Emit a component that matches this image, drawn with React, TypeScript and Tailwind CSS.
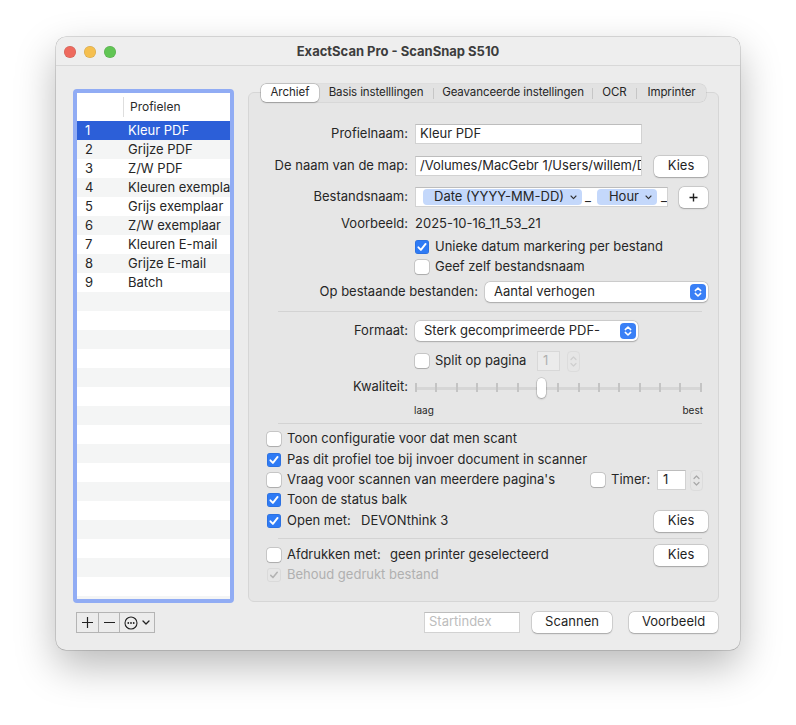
import React from "react";

const PROFILES = [
  "Kleur PDF",
  "Grijze PDF",
  "Z/W PDF",
  "Kleuren exemplaar",
  "Grijs exemplaar",
  "Z/W exemplaar",
  "Kleuren E-mail",
  "Grijze E-mail",
  "Batch",
];

const TABS = [
  { label: "Archief", w: "w-[58px]" },
  { label: "Basis instelllingen", w: "w-[114px]" },
  { label: "Geavanceerde instellingen", w: "w-[158px]" },
  { label: "OCR", w: "w-[43px]" },
  { label: "Imprinter", w: "w-[69px]" },
];

function Check({ on = false, dim = false }: { on?: boolean; dim?: boolean }) {
  if (dim) {
    return (
      <span className="w-[14px] h-[14px] shrink-0 rounded-[3px] border border-[#dadada] flex items-center justify-center">
        <svg width="12" height="12" viewBox="0 0 14 14">
          <path d="M3.2 7.4 L5.8 10 L10.8 3.8" fill="none" stroke="#b3b3b3" strokeWidth="1.8" strokeLinecap="round" strokeLinejoin="round" />
        </svg>
      </span>
    );
  }
  if (on) {
    return (
      <span className="w-[14px] h-[14px] shrink-0 rounded-[3px] bg-[#2f7bf5] flex items-center justify-center shadow-[inset_0_0_0_0.5px_rgba(0,0,0,0.15)]">
        <svg width="14" height="14" viewBox="0 0 14 14">
          <path d="M3.4 7.3 L5.9 9.9 L10.6 3.9" fill="none" stroke="white" strokeWidth="1.9" strokeLinecap="round" strokeLinejoin="round" />
        </svg>
      </span>
    );
  }
  return (
    <span className="w-[14px] h-[14px] shrink-0 rounded-[3px] bg-white shadow-[0_0_0_0.5px_rgba(0,0,0,0.25),0_0.5px_1px_rgba(0,0,0,0.15)]" />
  );
}

function Button({ children, className = "" }: { children: React.ReactNode; className?: string }) {
  return (
    <div
      className={`flex items-center justify-center h-[21px] shrink-0 rounded-[5px] bg-white text-[13px] text-[#1f1f1f] shadow-[0_0_0_0.5px_rgba(0,0,0,0.18),0_0.5px_1.5px_rgba(0,0,0,0.22)] ${className}`}
    >
      {children}
    </div>
  );
}

function PopUp({ text, className = "" }: { text: string; className?: string }) {
  return (
    <div
      className={`flex items-center h-[20px] shrink-0 rounded-[5px] bg-white pl-[9px] pr-[2px] shadow-[0_0_0_0.5px_rgba(0,0,0,0.16),0_0.5px_1.5px_rgba(0,0,0,0.2)] ${className}`}
    >
      <span className="flex-1 whitespace-nowrap overflow-hidden">{text}</span>
      <span className="w-[16px] h-[16px] rounded-[4px] bg-[#3a80f6] flex items-center justify-center">
        <svg width="16" height="16" viewBox="0 0 16 16">
          <path d="M5.3 6.6 L8 4 L10.7 6.6 M5.3 9.4 L8 12 L10.7 9.4" fill="none" stroke="white" strokeWidth="1.5" strokeLinecap="round" strokeLinejoin="round" />
        </svg>
      </span>
    </div>
  );
}

function Stepper({ dim = false }: { dim?: boolean }) {
  const c = dim ? "#cfcfcf" : "#a8a8a8";
  return (
    <span className="w-[13px] h-[21px] shrink-0 rounded-[4px] border border-[#dcdcdc] flex items-center justify-center">
      <svg width="11" height="19" viewBox="0 0 11 19">
        <path d="M3 7.5 L5.5 5 L8 7.5 M3 11.5 L5.5 14 L8 11.5" fill="none" stroke={c} strokeWidth="1.2" strokeLinecap="round" strokeLinejoin="round" />
      </svg>
    </span>
  );
}

function Token({ label, className = "" }: { label: string; className?: string }) {
  return (
    <span className={`flex items-center justify-end pr-[5px] h-[16px] shrink-0 rounded-[4px] bg-[#c4d8fb] ${className}`}>
      <span className="whitespace-nowrap">{label}</span>
      <svg width="7" height="5" viewBox="0 0 7 5" className="ml-[6px] shrink-0">
        <path d="M1 1 L3.5 3.6 L6 1" fill="none" stroke="#333" strokeWidth="1.1" strokeLinecap="round" strokeLinejoin="round" />
      </svg>
    </span>
  );
}

function Label({ children, w = "w-[166px]" }: { children: React.ReactNode; w?: string }) {
  return <span className={`${w} shrink-0 text-right pr-[7px] whitespace-nowrap`}>{children}</span>;
}

function Separator({ className = "" }: { className?: string }) {
  return <div className={`ml-[29px] w-[424px] h-px bg-[#d3d3d3] shrink-0 ${className}`} />;
}

function Field({ children, className = "" }: { children?: React.ReactNode; className?: string }) {
  return (
    <div
      className={`flex items-center h-[20px] shrink-0 bg-white border border-[#d2d2d2] border-t-[#bdbdbd] pl-[4px] overflow-hidden whitespace-nowrap ${className}`}
    >
      {children}
    </div>
  );
}

function ProfileTable() {
  const rows = Array.from({ length: 26 });
  return (
    <div className="h-[514px] rounded-[4px] border-[4px] border-[#91acf4] bg-white overflow-hidden flex flex-col">
      <div className="h-[28px] shrink-0 flex items-center bg-white">
        <div className="w-[47px] h-[20px] border-r border-[#dedede]" />
        <span className="pl-[6px] text-[12px] text-[#2a2a2a]">Profielen</span>
      </div>
      {rows.map((_, i) => {
        const sel = i === 0;
        const bg = sel ? "bg-[#2c5fd8] text-white" : i % 2 === 1 ? "bg-[#f4f5f5]" : "bg-white";
        return (
          <div key={i} className={`h-[19px] shrink-0 flex items-center text-[13px] ${bg}`}>
            <span className="w-[47px] pl-[8px]">{i < PROFILES.length ? i + 1 : ""}</span>
            <span className="pl-[4px] whitespace-nowrap overflow-hidden flex-1">{PROFILES[i] ?? ""}</span>
          </div>
        );
      })}
    </div>
  );
}

function Tabs() {
  return (
    <div className="relative z-10 self-center flex items-center h-[18px] rounded-[6px] bg-[#e2e2e2] shadow-[0_0_0_0.5px_rgba(0,0,0,0.12)] text-[11.5px] whitespace-nowrap">
      {TABS.map((t, i) => (
        <React.Fragment key={t.label}>
          {i > 1 && <span className="w-px h-[11px] bg-[#c6c6c6] shrink-0" />}
          {i === 0 ? (
            <span
              className={`${t.w} h-[18px] shrink-0 flex items-center justify-center rounded-[5px] bg-white shadow-[0_0_0_0.5px_rgba(0,0,0,0.2),0_0.5px_1.5px_rgba(0,0,0,0.2)]`}
            >
              {t.label}
            </span>
          ) : (
            <span className={`${t.w} h-[18px] shrink-0 flex items-center justify-center tracking-[-0.1px]`}>{t.label}</span>
          )}
        </React.Fragment>
      ))}
    </div>
  );
}

function Slider() {
  const ticks = Array.from({ length: 15 });
  return (
    <div className="relative w-[287px] h-[20px]">
      <div className="absolute left-0 right-0 top-[10px] h-[3px] rounded-full bg-[#d6d6d6]" />
      <div className="absolute left-0 right-0 top-[6px] flex justify-between">
        {ticks.map((_, i) => (
          <span key={i} className="w-[2px] h-[9px] bg-[#c4c4c4]" />
        ))}
      </div>
      <div className="absolute left-[122px] top-[1px] w-[9px] h-[20px] rounded-full bg-white shadow-[0_0_0_0.5px_rgba(0,0,0,0.2),0_1px_2px_rgba(0,0,0,0.25)]" />
    </div>
  );
}

export default function App() {
  return (
    <div className="w-[796px] h-[725px] bg-white pl-[56px] pt-[37px] font-['Inter',sans-serif] text-[13px] text-[#262626]">
      <div className="w-[684px] h-[613px] rounded-[10px] bg-[#ececec] flex flex-col overflow-hidden shadow-[0_0_0_0.5px_rgba(0,0,0,0.25),0_16px_40px_rgba(0,0,0,0.28)]">
        {/* title bar */}
        <div className="h-[29px] shrink-0 pt-[2px] grid grid-cols-[1fr_auto_1fr] items-center border-b border-[#d8d8d8] bg-[#eeeeee]">
          <div className="flex items-center gap-[8px] pl-[8px]">
            <span className="w-[12px] h-[12px] rounded-full bg-[#ee6a5e] shadow-[inset_0_0_0_0.5px_rgba(0,0,0,0.15)]" />
            <span className="w-[12px] h-[12px] rounded-full bg-[#f5bf4f] shadow-[inset_0_0_0_0.5px_rgba(0,0,0,0.15)]" />
            <span className="w-[12px] h-[12px] rounded-full bg-[#61c554] shadow-[inset_0_0_0_0.5px_rgba(0,0,0,0.15)]" />
          </div>
          <div className="font-bold text-[13px] text-[#3d3d3d]">ExactScan Pro - ScanSnap S510</div>
          <div />
        </div>

        {/* body */}
        <div className="flex pl-[17px] pt-[18px]">
          {/* left column */}
          <div className="w-[161px] pt-[5px] flex flex-col">
            <ProfileTable />
            <div className="mt-[9px] ml-[3px] w-[79px] h-[21px] flex border border-[#b4b4b4] text-[#222]">
              <span className="w-[22px] flex items-center justify-center border-r border-[#b4b4b4]">
                <svg width="13" height="13" viewBox="0 0 13 13">
                  <path d="M6.5 1 V12 M1 6.5 H12" stroke="#222" strokeWidth="1.2" />
                </svg>
              </span>
              <span className="w-[21px] flex items-center justify-center border-r border-[#b4b4b4]">
                <svg width="13" height="13" viewBox="0 0 13 13">
                  <path d="M1 6.5 H12" stroke="#222" strokeWidth="1.2" />
                </svg>
              </span>
              <span className="flex-1 flex items-center justify-center gap-[4px]">
                <svg width="14" height="14" viewBox="0 0 14 14">
                  <circle cx="7" cy="7" r="6" fill="none" stroke="#222" strokeWidth="1.1" />
                  <circle cx="4.3" cy="7" r="0.9" fill="#222" />
                  <circle cx="7" cy="7" r="0.9" fill="#222" />
                  <circle cx="9.7" cy="7" r="0.9" fill="#222" />
                </svg>
                <svg width="8" height="5" viewBox="0 0 8 5">
                  <path d="M1 1 L4 4 L7 1" fill="none" stroke="#222" strokeWidth="1.3" strokeLinecap="round" strokeLinejoin="round" />
                </svg>
              </span>
            </div>
          </div>

          {/* right column */}
          <div className="ml-[14px] w-[471px] flex flex-col">
            <Tabs />
            <div className="-mt-[10px] h-[510px] rounded-[6px] border border-[#d6d6d6] bg-[#e6e6e6] flex flex-col">
              <div className="mt-[31px] h-[20px] flex items-center">
                <Label>Profielnaam:</Label>
                <Field className="w-[227px]">Kleur PDF</Field>
              </div>
              <div className="mt-[12px] h-[20px] flex items-center">
                <Label>De naam van de map:</Label>
                <Field className="w-[227px]">/Volumes/MacGebr 1/Users/willem/Documents</Field>
                <Button className="ml-[12px] w-[54px]">Kies</Button>
              </div>
              <div className="mt-[11px] h-[20px] flex items-center">
                <Label>Bestandsnaam:</Label>
                <Field className="w-[253px] pl-[7px]">
                  <Token label="Date (YYYY-MM-DD)" className="w-[159px]" />
                  <span className="w-[15px] pl-[3px] shrink-0">_</span>
                  <Token label="Hour" className="w-[60px]" />
                  <span className="pl-[4px]">_</span>
                </Field>
                <Button className="ml-[11px] w-[29px]">
                  <svg width="9" height="9" viewBox="0 0 9 9">
                    <path d="M4.5 0.5 V8.5 M0.5 4.5 H8.5" stroke="#1f1f1f" strokeWidth="1.4" />
                  </svg>
                </Button>
              </div>
              <div className="mt-[7px] h-[20px] flex items-center">
                <Label>Voorbeeld:</Label>
                <span>2025-10-16_11_53_21</span>
              </div>
              <div className="mt-[3px] h-[20px] flex items-center pl-[166px] gap-[6px]">
                <Check on />
                <span>Unieke datum markering per bestand</span>
              </div>
              <div className="h-[20px] flex items-center pl-[166px] gap-[6px]">
                <Check />
                <span>Geef zelf bestandsnaam</span>
              </div>
              <div className="mt-[5px] h-[20px] flex items-center">
                <Label w="w-[236px]">Op bestaande bestanden:</Label>
                <PopUp text="Aantal verhogen" className="w-[223px]" />
              </div>
              <Separator className="mt-[9px]" />
              <div className="mt-[9px] h-[20px] flex items-center">
                <Label>Formaat:</Label>
                <PopUp text="Sterk gecomprimeerde PDF-" className="w-[223px]" />
              </div>
              <div className="mt-[10px] h-[20px] flex items-center pl-[166px]">
                <Check />
                <span className="ml-[6px] w-[102px]">Split op pagina</span>
                <span className="w-[23px] h-[20px] flex items-center pl-[5px] bg-[#ebebeb] border border-[#d8d8d8] text-[#b0b0b0]">
                  1
                </span>
                <span className="ml-[7px]">
                  <Stepper dim />
                </span>
              </div>
              <div className="mt-[6px] h-[20px] flex items-center">
                <Label>Kwaliteit:</Label>
                <Slider />
              </div>
              <div className="mt-[7px] h-[12px] flex items-center justify-between pl-[165px] w-[454px] text-[10px]">
                <span>laag</span>
                <span>best</span>
              </div>
              <Separator className="mt-[7px]" />
              <div className="mt-[5px] h-[20px] flex items-center pl-[18px] gap-[6px]">
                <Check />
                <span>Toon configuratie voor dat men scant</span>
              </div>
              <div className="mt-[1px] h-[20px] flex items-center pl-[18px] gap-[6px]">
                <Check on />
                <span>Pas dit profiel toe bij invoer document in scanner</span>
              </div>
              <div className="h-[20px] flex items-center">
                <div className="w-[342px] pl-[18px] flex items-center gap-[6px]">
                  <Check />
                  <span>Vraag voor scannen van meerdere pagina's</span>
                </div>
                <Check />
                <span className="ml-[6px] w-[46px]">Timer:</span>
                <Field className="w-[29px] pl-[5px]">1</Field>
                <span className="ml-[4px]">
                  <Stepper />
                </span>
              </div>
              <div className="h-[20px] flex items-center pl-[18px] gap-[6px]">
                <Check on />
                <span>Toon de status balk</span>
              </div>
              <div className="mt-[1px] h-[20px] flex items-center pl-[18px] pr-[10px]">
                <Check on />
                <span className="ml-[6px] w-[74px]">Open met:</span>
                <span>DEVONthink 3</span>
                <Button className="ml-auto w-[54px]">Kies</Button>
              </div>
              <Separator className="mt-[7px]" />
              <div className="mt-[6px] h-[20px] flex items-center pl-[18px] pr-[10px]">
                <Check />
                <span className="ml-[6px] w-[103px]">Afdrukken met:</span>
                <span>geen printer geselecteerd</span>
                <Button className="ml-auto w-[54px]">Kies</Button>
              </div>
              <div className="h-[20px] flex items-center pl-[18px] gap-[6px] text-[#b0b0b0]">
                <Check dim />
                <span>Behoud gedrukt bestand</span>
              </div>
            </div>

            {/* bottom buttons */}
            <div className="mt-[9px] h-[22px] flex items-center justify-end pr-[1px]">
              <div className="w-[96px] h-[21px] flex items-center pl-[4px] bg-white border border-[#d2d2d2] border-t-[#bdbdbd] text-[#bdbdbd]">
                Startindex
              </div>
              <Button className="ml-[12px] w-[80px]">Scannen</Button>
              <Button className="ml-[17px] w-[89px]">Voorbeeld</Button>
            </div>
          </div>
        </div>
      </div>
    </div>
  );
}
